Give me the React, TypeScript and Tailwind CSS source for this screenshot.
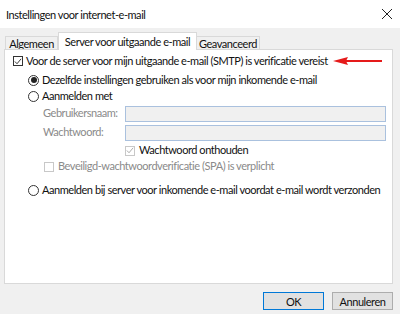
import React from "react";

const font = { fontFamily: 'Lato, "Noto Sans", sans-serif', letterSpacing: "-0.45px" };

function CheckBox({ checked, disabled }: { checked?: boolean; disabled?: boolean }) {
  const border = disabled ? "border-[#c8c8c8]" : "border-[#333]";
  return (
    <span className={`w-[10px] h-[10px] border ${border} bg-white flex items-center justify-center shrink-0`}>
      {checked && (
        <svg width="9" height="9" viewBox="0 0 9 9">
          <path d="M1 4.5 L3.4 7 L8 1.5" fill="none" stroke={disabled ? "#a0a0a0" : "#222"} strokeWidth="1" />
        </svg>
      )}
    </span>
  );
}

function Radio({ checked }: { checked?: boolean }) {
  return (
    <span className="w-[11px] h-[11px] rounded-full border border-[#333] bg-white flex items-center justify-center shrink-0">
      {checked && <span className="w-[6px] h-[6px] rounded-full bg-[#222]" />}
    </span>
  );
}

function Field() {
  return <div className="h-[16px] flex-1 border border-[#aac1de] bg-[#f0f0f0]" />;
}

export default function App() {
  return (
    <div className="w-[400px] h-[314px] bg-[#f0f0f0] text-[11px] text-[#111] flex flex-col overflow-hidden whitespace-nowrap" style={font}>
      <div className="h-[28px] bg-white flex items-center justify-between pl-[6px] pr-[7px] shrink-0">
        <span className="leading-none">Instellingen voor internet-e-mail</span>
        <svg width="12" height="12" viewBox="0 0 12 12">
          <path d="M1 1 L11 11 M11 1 L1 11" stroke="#222" strokeWidth="1" />
        </svg>
      </div>

      <div className="flex items-end h-[21px] pl-[5px] shrink-0">
        <div className="h-[13px] w-[53px] border border-b-0 border-[#d9d9d9] bg-[#f0f0f0] flex items-center justify-center leading-none">Algemeen</div>
        <div className="h-[18px] w-[139px] border border-b-0 border-[#d9d9d9] bg-white flex items-center justify-center leading-none relative top-[1px] z-10">Server voor uitgaande e-mail</div>
        <div className="h-[13px] w-[63px] border border-b-0 border-l-0 border-[#d9d9d9] bg-[#f0f0f0] flex items-center justify-center leading-none">Geavanceerd</div>
      </div>

      <div className="mx-[4px] w-[389px] h-[235px] shrink-0 bg-white border border-[#d9d9d9] pl-[8px] pt-[3px] flex flex-col relative">
        <div className="flex items-center gap-[3px] h-[16px]">
          <CheckBox checked />
          <span>Voor de server voor mijn uitgaande e-mail (SMTP) is verificatie vereist</span>
        </div>
        <svg width="50" height="10" viewBox="0 0 50 10" className="absolute left-[328px] top-[6px]">
          <path d="M0 5 L15 1 L13 5 L15 9 Z" fill="#e51a1a" />
          <path d="M12 5 L49 5" stroke="#e51a1a" strokeWidth="2" />
        </svg>

        <div className="pl-[15px] mt-[3px] flex flex-col">
          <div className="flex items-center gap-[3px] h-[16px]">
            <Radio checked />
            <span>Dezelfde instellingen gebruiken als voor mijn inkomende e-mail</span>
          </div>
          <div className="flex items-center gap-[3px] h-[16px]">
            <Radio />
            <span>Aanmelden met</span>
          </div>
        </div>

        <div className="pl-[30px] pr-[6px] flex flex-col text-[#8a8a8a]">
          <div className="flex items-center h-[19px]">
            <span className="w-[82px]">Gebruikersnaam:</span>
            <Field />
          </div>
          <div className="flex items-center h-[19px]">
            <span className="w-[82px]">Wachtwoord:</span>
            <Field />
          </div>
          <div className="flex items-center gap-[4px] h-[17px] pl-[82px]">
            <CheckBox checked disabled />
            <span className="text-[#111]">Wachtwoord onthouden</span>
          </div>
          <div className="flex items-center gap-[4px] h-[15px] pl-[1px]">
            <CheckBox disabled />
            <span>Beveiligd-wachtwoordverificatie (SPA) is verplicht</span>
          </div>
        </div>

        <div className="pl-[15px] mt-[8px] flex items-center gap-[3px] h-[16px]">
          <Radio />
          <span>Aanmelden bij server voor inkomende e-mail voordat e-mail wordt verzonden</span>
        </div>
      </div>

      <div className="flex justify-end gap-[8px] pr-[7px] mt-[8px]">
        <button className="w-[61px] h-[18px] bg-[#e1e1e1] border border-[#0078d7] leading-none">OK</button>
        <button className="w-[61px] h-[18px] bg-[#e1e1e1] border border-[#adadad] leading-none">Annuleren</button>
      </div>
    </div>
  );
}
